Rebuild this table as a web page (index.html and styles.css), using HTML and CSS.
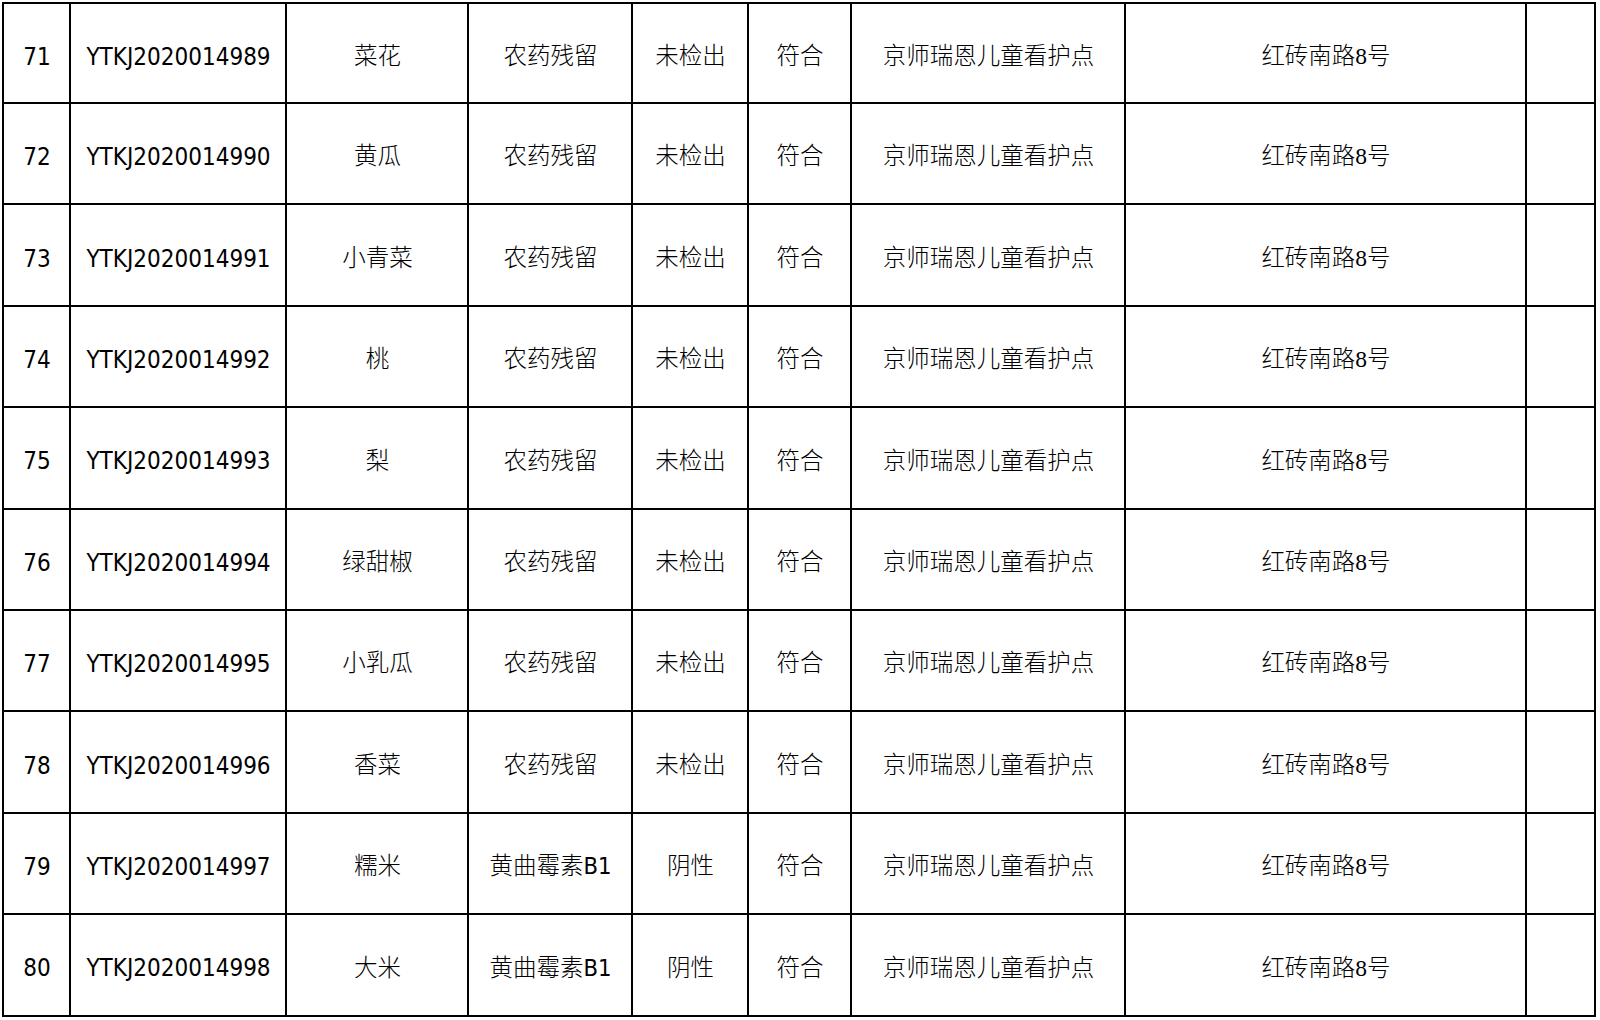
FILE: index.html
```html
<!DOCTYPE html>
<html lang="zh-CN">
<head>
<meta charset="utf-8">
<title>检测结果</title>
<link rel="stylesheet" href="styles.css">
</head>
<body>
<table class="grid">
  <colgroup>
    <col class="c-no"><col class="c-code"><col class="c-name"><col class="c-item"><col class="c-res"><col class="c-judge"><col class="c-unit"><col class="c-addr"><col class="c-note">
  </colgroup>
  <tbody>
    <tr class="first"><td>71</td><td>YTKJ2020014989</td><td class="cjk">菜花</td><td class="cjk">农药残留</td><td class="cjk">未检出</td><td class="cjk">符合</td><td class="cjk">京师瑞恩儿童看护点</td><td class="addr">红砖南路8号</td><td></td></tr>
    <tr><td>72</td><td>YTKJ2020014990</td><td class="cjk">黄瓜</td><td class="cjk">农药残留</td><td class="cjk">未检出</td><td class="cjk">符合</td><td class="cjk">京师瑞恩儿童看护点</td><td class="addr">红砖南路8号</td><td></td></tr>
    <tr><td>73</td><td>YTKJ2020014991</td><td class="cjk">小青菜</td><td class="cjk">农药残留</td><td class="cjk">未检出</td><td class="cjk">符合</td><td class="cjk">京师瑞恩儿童看护点</td><td class="addr">红砖南路8号</td><td></td></tr>
    <tr><td>74</td><td>YTKJ2020014992</td><td class="cjk">桃</td><td class="cjk">农药残留</td><td class="cjk">未检出</td><td class="cjk">符合</td><td class="cjk">京师瑞恩儿童看护点</td><td class="addr">红砖南路8号</td><td></td></tr>
    <tr><td>75</td><td>YTKJ2020014993</td><td class="cjk">梨</td><td class="cjk">农药残留</td><td class="cjk">未检出</td><td class="cjk">符合</td><td class="cjk">京师瑞恩儿童看护点</td><td class="addr">红砖南路8号</td><td></td></tr>
    <tr><td>76</td><td>YTKJ2020014994</td><td class="cjk">绿甜椒</td><td class="cjk">农药残留</td><td class="cjk">未检出</td><td class="cjk">符合</td><td class="cjk">京师瑞恩儿童看护点</td><td class="addr">红砖南路8号</td><td></td></tr>
    <tr><td>77</td><td>YTKJ2020014995</td><td class="cjk">小乳瓜</td><td class="cjk">农药残留</td><td class="cjk">未检出</td><td class="cjk">符合</td><td class="cjk">京师瑞恩儿童看护点</td><td class="addr">红砖南路8号</td><td></td></tr>
    <tr><td>78</td><td>YTKJ2020014996</td><td class="cjk">香菜</td><td class="cjk">农药残留</td><td class="cjk">未检出</td><td class="cjk">符合</td><td class="cjk">京师瑞恩儿童看护点</td><td class="addr">红砖南路8号</td><td></td></tr>
    <tr><td>79</td><td>YTKJ2020014997</td><td class="cjk">糯米</td><td class="cjk">黄曲霉素B1</td><td class="cjk">阴性</td><td class="cjk">符合</td><td class="cjk">京师瑞恩儿童看护点</td><td class="addr">红砖南路8号</td><td></td></tr>
    <tr><td>80</td><td>YTKJ2020014998</td><td class="cjk">大米</td><td class="cjk">黄曲霉素B1</td><td class="cjk">阴性</td><td class="cjk">符合</td><td class="cjk">京师瑞恩儿童看护点</td><td class="addr">红砖南路8号</td><td></td></tr>
  </tbody>
</table>
</body>
</html>
```
FILE: styles.css
```css
html, body {
  margin: 0;
  padding: 0;
  background: #ffffff;
}

body {
  padding: 2px 0 0 2px;
}

.grid {
  border-collapse: separate;
  border-spacing: 0;
  table-layout: fixed;
  width: 1594px;
  border-top: 2px solid #000;
  border-left: 2px solid #000;
  color: #000;
  font-family: "DejaVu Sans Condensed", "DejaVu Sans", "Noto Sans CJK SC", sans-serif;
  font-size: 24px;
}

.c-no { width: 67px; }
.c-code { width: 216px; }
.c-name { width: 182px; }
.c-item { width: 164px; }
.c-res { width: 116px; }
.c-judge { width: 103px; }
.c-unit { width: 274px; }
.c-addr { width: 401px; }
.c-note { width: 69px; }

.grid td {
  box-sizing: border-box;
  border-right: 2px solid #000;
  border-bottom: 2px solid #000;
  padding: 7px 0 0 1px;
  height: 101.4px;
  text-align: center;
  vertical-align: middle;
  white-space: nowrap;
  overflow: hidden;
  line-height: 1;
}

.grid tr.first td {
  height: 100px;
}

.grid td.cjk {
  font-family: "DejaVu Sans Condensed", "Noto Sans CJK SC", sans-serif;
  font-weight: 300;
  font-size: 23.5px;
}

.grid td.addr {
  font-family: "Liberation Serif", "Noto Sans CJK SC", serif;
  font-weight: 300;
  font-size: 23.5px;
}
```
